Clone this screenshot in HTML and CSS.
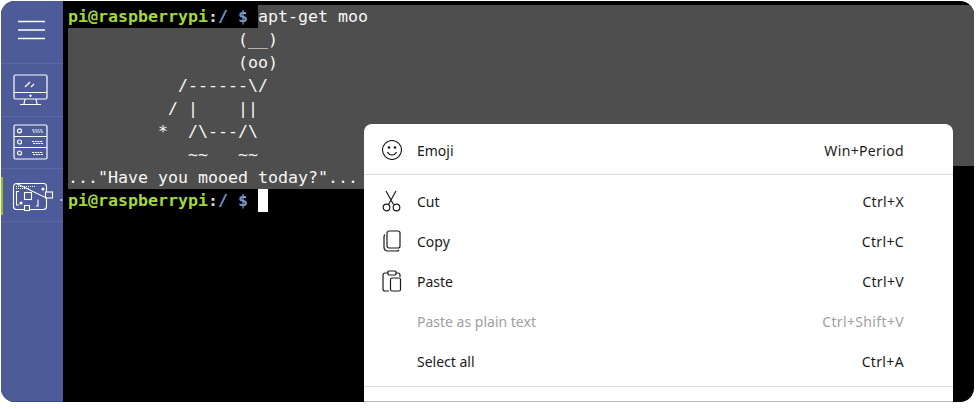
FILE: index.html
```html
<!DOCTYPE html>
<html lang="en">
<head>
<meta charset="utf-8">
<title>Terminal</title>
<link rel="stylesheet" href="styles.css">
</head>
<body>
<div class="window">
  <nav class="sidebar">
    <div class="nav-item nav-menu">
      <svg width="28" height="20" viewBox="0 0 28 20"><path d="M0 1.500H27M0 10H27M0 18.500H27" stroke="#fff" stroke-width="1.600" fill="none"/></svg>
    </div>
    <div class="nav-item">
      <svg width="36" height="32" viewBox="0 0 36 32" fill="none" stroke="#fff" stroke-width="1.200"><rect x="1" y="1" width="33" height="24" rx="1.500"/><path d="M1 18.500H34M12 25l-1 5M23 25l1 5M7 30.500H28M12 13l5-5M18 13l3-3"/><path d="M17.500 20.500v2.500M16 21.800h3" stroke-width="1"/></svg>
    </div>
    <div class="nav-item">
      <svg width="36" height="36" viewBox="0 0 36 36" fill="none" stroke="#fff" stroke-width="1.200"><rect x="1" y="1" width="33" height="34" rx="1.500"/><path d="M1 12.500H34M1 23.500H34"/><circle cx="6.500" cy="6.800" r="2"/><circle cx="6.500" cy="18" r="2"/><circle cx="6.500" cy="29" r="2"/><path d="M19 6h11M20 8h10M19 17.500h11M20 19.500h10M19 28.500h11M20 30.500h10" stroke-dasharray="2 .7"/></svg>
    </div>
    <div class="nav-item nav-active">
      <svg class="pi-icon" width="50" height="32" viewBox="0 0 50 32" fill="none" stroke="#fff" stroke-width="1.100"><path d="M3.500 4.500H30.500a3 3 0 0 1 3 3V13M33.500 19V27.500a3 3 0 0 1-3 3H3.500a3 3 0 0 1-3-3V7.500a3 3 0 0 1 3-3Z"/><rect x="32.500" y="13" width="7" height="6"/><rect x="11.500" y="13.500" width="7" height="7"/><rect class="pi-port" x="11.500" y="26.500" width="5" height="5"/><path d="M6 12.500H3.500V26H6M23 27H25V20.500"/><path d="M3 7.500H23M3 9.500H16" stroke-dasharray="1 1" stroke-width="1.200"/><circle cx="30" cy="10" r="1" fill="#fff"/><circle cx="8" cy="24" r="1" fill="#fff"/><path d="M47.500 21h1.500" stroke-width="1.500"/></svg>
    </div>
  </nav>
  <main class="terminal">
    <div class="line"><span class="user">pi@raspberrypi</span><span class="colon">:</span><span class="path">/ $ </span><span class="selected-rest">apt-get moo</span></div>
    <div class="line selected">                 (__)</div>
    <div class="line selected">                 (oo)</div>
    <div class="line selected">           /------\/</div>
    <div class="line selected">          / |    ||</div>
    <div class="line selected">         *  /\---/\</div>
    <div class="line selected">            ~~   ~~</div>
    <div class="line selected selected-last">..."Have you mooed today?"...</div>
    <div class="line"><span class="user">pi@raspberrypi</span><span class="colon">:</span><span class="path">/ $ </span><span class="cursor"></span></div>
  </main>
  <div class="context-menu">
    <div class="menu-row">
      <svg class="menu-icon" width="20" height="20" viewBox="0 0 20 20" fill="none" stroke="#1a1a1a" stroke-width="1.100"><circle cx="10" cy="10" r="9.500"/><circle cx="7" cy="7.500" r=".8" fill="#1a1a1a"/><circle cx="13" cy="7.500" r=".8" fill="#1a1a1a"/><path d="M5.500 12c1 2 2.700 3 4.500 3s3.500-1 4.500-3"/></svg>
      <span class="menu-label">Emoji</span><span class="menu-key">Win+Period</span>
    </div>
    <div class="menu-sep sep-first"></div>
    <div class="menu-row">
      <svg class="menu-icon" width="20" height="22" viewBox="0 0 20 22" fill="none" stroke="#1a1a1a" stroke-width="1.200"><path d="M4 1l7.500 13.500M14 1L6.500 14.500"/><circle cx="4.500" cy="17.500" r="3.300"/><circle cx="14.500" cy="17.500" r="3.300"/></svg>
      <span class="menu-label">Cut</span><span class="menu-key">Ctrl+X</span>
    </div>
    <div class="menu-row">
      <svg class="menu-icon" width="20" height="22" viewBox="0 0 20 22" fill="none" stroke="#1a1a1a" stroke-width="1.200"><rect x="5" y="1" width="13" height="17" rx="2"/><path d="M3 4.500C2 5 2 6 2 7v10c0 2.500 1.500 4 4 4h9c1 0 1.500-.5 2-1"/></svg>
      <span class="menu-label">Copy</span><span class="menu-key">Ctrl+C</span>
    </div>
    <div class="menu-row">
      <svg class="menu-icon" width="20" height="22" viewBox="0 0 20 22" fill="none" stroke="#1a1a1a" stroke-width="1.200"><path d="M6 3H3a2 2 0 0 0-2 2v14a2 2 0 0 0 2 2h4M14 3h2a2 2 0 0 1 2 2v2"/><rect x="6" y="1" width="8" height="4" rx="1"/><rect x="8.500" y="8" width="10" height="13" rx="1.500"/></svg>
      <span class="menu-label">Paste</span><span class="menu-key">Ctrl+V</span>
    </div>
    <div class="menu-row menu-disabled">
      <span class="menu-icon"></span>
      <span class="menu-label">Paste as plain text</span><span class="menu-key">Ctrl+Shift+V</span>
    </div>
    <div class="menu-row">
      <span class="menu-icon"></span>
      <span class="menu-label">Select all</span><span class="menu-key">Ctrl+A</span>
    </div>
    <div class="menu-sep sep-last"></div>
  </div>
</div>
</body>
</html>
```
FILE: styles.css
```css
* { box-sizing: border-box; }
html, body { margin: 0; height: 100%; background: #fff; overflow: hidden; }
.window {
  position: relative;
  display: flex;
  width: 973px;
  height: 401px;
  margin: 1px 0 0 1px;
  background: #000;
  border-radius: 14px;
  overflow: hidden;
}
.sidebar {
  flex: 0 0 62px;
  display: flex;
  flex-direction: column;
  background: #4d5b98;
  border-bottom: 1px solid #3d4a80;
  z-index: 1;
}
.nav-item {
  position: relative;
  height: 53px;
  display: flex;
  align-items: center;
  padding-left: 12px;
  border-bottom: 1px solid #5a68a3;
}
.nav-menu { height: 63px; padding-left: 17px; padding-bottom: 4px; }
.nav-item + .nav-item { height: 52.500px; }
.nav-active::before {
  content: "";
  position: absolute;
  left: 0;
  top: 8px;
  width: 2px;
  height: 38px;
  background: #8fc31f;
}
.pi-icon { overflow: visible; }
.pi-port { fill: #4d5b98; }
.terminal {
  flex: 1;
  padding: 4px 0 0 5px;
  font: 16.610px/23px "DejaVu Sans Mono", monospace;
  color: #f7f7f7;
}
.line { height: 23px; display: flex; white-space: pre; }
.selected { background: #4e4e4e; }
.selected-last { width: 320px; }
.selected-rest { flex: 1; background: #4e4e4e; }
.user { color: #a3d83a; font-weight: 700; }
.colon { color: #d8d8d8; font-weight: 700; }
.path { color: #7c98d0; font-weight: 700; }
.cursor { width: 10px; height: 23px; background: #fff; }
.context-menu {
  position: absolute;
  left: 363px;
  top: 123px;
  right: 21px;
  bottom: 0;
  padding-top: 6px;
  background: #fff;
  border-radius: 8px 8px 0 0;
  border-bottom: 1px solid #b8b8b8;
  font: 14px "Noto Sans", sans-serif;
  color: #1a1a1a;
}
.menu-row {
  height: 40px;
  display: flex;
  align-items: center;
  padding: 0 49px 0 18px;
}
.menu-icon { flex: 0 0 20px; width: 20px; margin-right: 15px; }
.menu-label { flex: 1; }
.menu-key { letter-spacing: .35px; }
.menu-disabled { color: #a0a0a0; }
.menu-sep { height: 1px; background: #d9d9d9; }
.sep-first { margin: 4px 0 6px; }
.sep-last { margin-top: 5px; }
```
